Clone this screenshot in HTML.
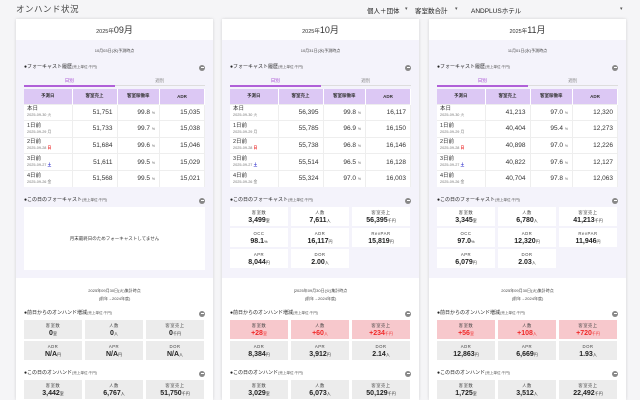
<!DOCTYPE html>
<html><head><meta charset="utf-8"><style>
*{margin:0;padding:0;box-sizing:border-box}
body{width:640px;height:400px;overflow:hidden;background:#f5f5f7;font-family:"Liberation Sans","Noto Sans CJK JP",sans-serif;color:#333;position:relative}
.ttl{position:absolute;left:16px;top:3px;font-size:8.5px;color:#444;letter-spacing:.5px}
.top{position:absolute;top:5px;font-size:6.5px;color:#222}
.car{position:absolute;top:6px;font-size:5px;color:#555}
.card{position:absolute;top:19px;width:197px;height:381px;background:#fff;box-shadow:0 0 3px rgba(0,0,0,.15);overflow:hidden}
.hd{position:absolute;left:0;top:0;width:100%;height:21px;line-height:22px;text-align:center;font-size:9px;color:#333}
.hd small{font-size:5.5px}
.lav{position:absolute;left:0;top:21px;width:100%;height:238px;background:#f4f3fb}
.ab{position:absolute}
.dt{left:0;width:100%;text-align:center;font-size:4px;color:#444;line-height:6px}
.sec{left:8px;right:8px;font-size:5px;line-height:7px;color:#222}
.sec small{font-size:3.6px;color:#555}
.mi{position:absolute;right:0;top:0.5px;width:6px;height:6px;border-radius:50%;background:#888}
.mi:after{content:"";position:absolute;left:1.5px;top:2.5px;width:3px;height:1px;background:#fff}
.tabs{left:8px;right:8px;height:11px;font-size:4.5px}
.tabs div{position:absolute;top:0;width:50%;text-align:center;line-height:9px}
.tabs .a{left:0;color:#a040d0;border-bottom:2px solid #b060d8}
.tabs .b{right:0;color:#888;border-bottom:1px solid #ddd;height:10px}
table{position:absolute;left:8px;top:70px;width:181px;border-collapse:collapse;background:#fff}
th{background:#dcc8f4;height:15px;font-size:4.5px;font-weight:bold;color:#333;border-right:1px solid #fff}
td{height:16.6px;border-top:1px solid #eee;border-right:1px solid #eee;font-size:6.5px;text-align:right;padding-right:4px;color:#333}
td.d{text-align:left;padding-left:3px;font-size:5.5px;line-height:6px;width:48px}
td.d span{display:block;font-size:3.8px;color:#777}
.r{color:#e33}.bl{color:#33c}
td small{font-size:3.5px;color:#666}
.bx{position:absolute;width:58px;height:19px;text-align:center;background:#fff}
.bx .l{font-size:4.3px;color:#444;margin-top:3px;line-height:6px;letter-spacing:.5px}
.bx .v{font-size:7px;line-height:9px;color:#222;font-weight:bold}
.bx .v small{font-size:4px;font-weight:normal}
.g{background:#ececec}
.p{background:#f7c8cc}
.p .v{color:#f02a2a}
.msg{left:8px;right:8px;top:188px;height:63px;background:#fff;font-size:4.5px;text-align:center;line-height:63px;color:#333}
</style></head><body>
<div class="ttl">オンハンド状況</div>
<div class="top" style="left:367px">個人＋団体</div><div class="car" style="left:405px">▾</div>
<div class="top" style="left:415px">客室数合計</div><div class="car" style="left:455px">▾</div>
<div class="top" style="left:471px">ANDPLUSホテル</div><div class="car" style="left:620px">▾</div>

<!-- card 1 -->
<div class="card" style="left:16px">
<div class="hd"><small>2025年</small>09月</div>
<div class="lav"></div>
<div class="ab dt" style="top:29px">10月03日(水)予測時点</div>
<div class="ab sec" style="top:45px">●フォーキャスト履歴<small>(売上単位:千円)</small><div class="mi"></div></div>
<div class="ab tabs" style="top:57px"><div class="a">日別</div><div class="b">週別</div></div>
<table><tr><th>予測日</th><th>客室売上</th><th>客室稼働率</th><th>ADR</th></tr>
<tr><td class="d">本日<span>2025-09-30 火</span></td><td>51,751</td><td>99.8 <small>%</small></td><td>15,035</td></tr>
<tr><td class="d">1日前<span>2025-09-29 月</span></td><td>51,733</td><td>99.7 <small>%</small></td><td>15,038</td></tr>
<tr><td class="d">2日前<span>2025-09-28 <b class="r">日</b></span></td><td>51,684</td><td>99.6 <small>%</small></td><td>15,046</td></tr>
<tr><td class="d">3日前<span>2025-09-27 <b class="bl">土</b></span></td><td>51,611</td><td>99.5 <small>%</small></td><td>15,029</td></tr>
<tr><td class="d">4日前<span>2025-09-26 金</span></td><td>51,568</td><td>99.5 <small>%</small></td><td>15,021</td></tr></table>
<div class="ab sec" style="top:178px">●この日のフォーキャスト<small>(売上単位:千円)</small><div class="mi"></div></div>
<div class="ab msg">月末最終日のためフォーキャストしてません</div>
<div class="ab dt" style="top:269px">2025年09月30日(火)集計時点</div>
<div class="ab dt" style="top:277px">(前年→2024年度)</div>
<div class="ab sec" style="top:291px">●前日からのオンハンド増減<small>(売上単位:千円)</small><div class="mi"></div></div>
<div class="bx g" style="left:8px;top:301px"><div class="l">客室数</div><div class="v">0<small>室</small></div></div>
<div class="bx g" style="left:69px;top:301px"><div class="l">人数</div><div class="v">0<small>人</small></div></div>
<div class="bx g" style="left:130px;top:301px"><div class="l">客室売上</div><div class="v">0<small>千円</small></div></div>
<div class="bx g" style="left:8px;top:322px"><div class="l">ADR</div><div class="v">N/A<small>円</small></div></div>
<div class="bx g" style="left:69px;top:322px"><div class="l">APR</div><div class="v">N/A<small>円</small></div></div>
<div class="bx g" style="left:130px;top:322px"><div class="l">DOR</div><div class="v">N/A<small>人</small></div></div>
<div class="ab sec" style="top:351px">●この日のオンハンド<small>(売上単位:千円)</small><div class="mi"></div></div>
<div class="bx g" style="left:8px;top:361px"><div class="l">客室数</div><div class="v">3,442<small>室</small></div></div>
<div class="bx g" style="left:69px;top:361px"><div class="l">人数</div><div class="v">6,767<small>人</small></div></div>
<div class="bx g" style="left:130px;top:361px"><div class="l">客室売上</div><div class="v">51,750<small>千円</small></div></div>
</div>

<!-- card 2 -->
<div class="card" style="left:222px">
<div class="hd"><small>2025年</small>10月</div>
<div class="lav"></div>
<div class="ab dt" style="top:29px">10月31日(水)予測時点</div>
<div class="ab sec" style="top:45px">●フォーキャスト履歴<small>(売上単位:千円)</small><div class="mi"></div></div>
<div class="ab tabs" style="top:57px"><div class="a">日別</div><div class="b">週別</div></div>
<table><tr><th>予測日</th><th>客室売上</th><th>客室稼働率</th><th>ADR</th></tr>
<tr><td class="d">本日<span>2025-09-30 火</span></td><td>56,395</td><td>99.8 <small>%</small></td><td>16,117</td></tr>
<tr><td class="d">1日前<span>2025-09-29 月</span></td><td>55,785</td><td>96.9 <small>%</small></td><td>16,150</td></tr>
<tr><td class="d">2日前<span>2025-09-28 <b class="r">日</b></span></td><td>55,738</td><td>96.8 <small>%</small></td><td>16,146</td></tr>
<tr><td class="d">3日前<span>2025-09-27 <b class="bl">土</b></span></td><td>55,514</td><td>96.5 <small>%</small></td><td>16,128</td></tr>
<tr><td class="d">4日前<span>2025-09-26 金</span></td><td>55,324</td><td>97.0 <small>%</small></td><td>16,003</td></tr></table>
<div class="ab sec" style="top:178px">●この日のフォーキャスト<small>(売上単位:千円)</small><div class="mi"></div></div>
<div class="bx" style="left:8px;top:188px"><div class="l">客室数</div><div class="v">3,499<small>室</small></div></div>
<div class="bx" style="left:69px;top:188px"><div class="l">人数</div><div class="v">7,611<small>人</small></div></div>
<div class="bx" style="left:130px;top:188px"><div class="l">客室売上</div><div class="v">56,395<small>千円</small></div></div>
<div class="bx" style="left:8px;top:209px"><div class="l">OCC</div><div class="v">98.1<small>%</small></div></div>
<div class="bx" style="left:69px;top:209px"><div class="l">ADR</div><div class="v">16,117<small>円</small></div></div>
<div class="bx" style="left:130px;top:209px"><div class="l">RevPAR</div><div class="v">15,819<small>円</small></div></div>
<div class="bx" style="left:8px;top:230px"><div class="l">APR</div><div class="v">8,044<small>円</small></div></div>
<div class="bx" style="left:69px;top:230px"><div class="l">DOR</div><div class="v">2.00<small>人</small></div></div>
<div class="ab dt" style="top:269px">[2025年09月30日(火)集計時点</div>
<div class="ab dt" style="top:277px">(前年→2024年度)</div>
<div class="ab sec" style="top:291px">●前日からのオンハンド増減<small>(売上単位:千円)</small><div class="mi"></div></div>
<div class="bx p" style="left:8px;top:301px"><div class="l">客室数</div><div class="v">+28<small>室</small></div></div>
<div class="bx p" style="left:69px;top:301px"><div class="l">人数</div><div class="v">+60<small>人</small></div></div>
<div class="bx p" style="left:130px;top:301px"><div class="l">客室売上</div><div class="v">+234<small>千円</small></div></div>
<div class="bx g" style="left:8px;top:322px"><div class="l">ADR</div><div class="v">8,384<small>円</small></div></div>
<div class="bx g" style="left:69px;top:322px"><div class="l">APR</div><div class="v">3,912<small>円</small></div></div>
<div class="bx g" style="left:130px;top:322px"><div class="l">DOR</div><div class="v">2.14<small>人</small></div></div>
<div class="ab sec" style="top:351px">●この日のオンハンド<small>(売上単位:千円)</small><div class="mi"></div></div>
<div class="bx g" style="left:8px;top:361px"><div class="l">客室数</div><div class="v">3,029<small>室</small></div></div>
<div class="bx g" style="left:69px;top:361px"><div class="l">人数</div><div class="v">6,073<small>人</small></div></div>
<div class="bx g" style="left:130px;top:361px"><div class="l">客室売上</div><div class="v">50,129<small>千円</small></div></div>
</div>

<!-- card 3 -->
<div class="card" style="left:429px">
<div class="hd"><small>2025年</small>11月</div>
<div class="lav"></div>
<div class="ab dt" style="top:29px">11月01日(水)予測時点</div>
<div class="ab sec" style="top:45px">●フォーキャスト履歴<small>(売上単位:千円)</small><div class="mi"></div></div>
<div class="ab tabs" style="top:57px"><div class="a">日別</div><div class="b">週別</div></div>
<table><tr><th>予測日</th><th>客室売上</th><th>客室稼働率</th><th>ADR</th></tr>
<tr><td class="d">本日<span>2025-09-30 火</span></td><td>41,213</td><td>97.0 <small>%</small></td><td>12,320</td></tr>
<tr><td class="d">1日前<span>2025-09-29 月</span></td><td>40,404</td><td>95.4 <small>%</small></td><td>12,273</td></tr>
<tr><td class="d">2日前<span>2025-09-28 <b class="r">日</b></span></td><td>40,898</td><td>97.0 <small>%</small></td><td>12,226</td></tr>
<tr><td class="d">3日前<span>2025-09-27 <b class="bl">土</b></span></td><td>40,822</td><td>97.6 <small>%</small></td><td>12,127</td></tr>
<tr><td class="d">4日前<span>2025-09-26 金</span></td><td>40,704</td><td>97.8 <small>%</small></td><td>12,063</td></tr></table>
<div class="ab sec" style="top:178px">●この日のフォーキャスト<small>(売上単位:千円)</small><div class="mi"></div></div>
<div class="bx" style="left:8px;top:188px"><div class="l">客室数</div><div class="v">3,345<small>室</small></div></div>
<div class="bx" style="left:69px;top:188px"><div class="l">人数</div><div class="v">6,780<small>人</small></div></div>
<div class="bx" style="left:130px;top:188px"><div class="l">客室売上</div><div class="v">41,213<small>千円</small></div></div>
<div class="bx" style="left:8px;top:209px"><div class="l">OCC</div><div class="v">97.0<small>%</small></div></div>
<div class="bx" style="left:69px;top:209px"><div class="l">ADR</div><div class="v">12,320<small>円</small></div></div>
<div class="bx" style="left:130px;top:209px"><div class="l">RevPAR</div><div class="v">11,946<small>円</small></div></div>
<div class="bx" style="left:8px;top:230px"><div class="l">APR</div><div class="v">6,079<small>円</small></div></div>
<div class="bx" style="left:69px;top:230px"><div class="l">DOR</div><div class="v">2.03<small>人</small></div></div>
<div class="ab dt" style="top:269px">2025年09月30日(火)集計時点</div>
<div class="ab dt" style="top:277px">(前年→2024年度)</div>
<div class="ab sec" style="top:291px">●前日からのオンハンド増減<small>(売上単位:千円)</small><div class="mi"></div></div>
<div class="bx p" style="left:8px;top:301px"><div class="l">客室数</div><div class="v">+56<small>室</small></div></div>
<div class="bx p" style="left:69px;top:301px"><div class="l">人数</div><div class="v">+108<small>人</small></div></div>
<div class="bx p" style="left:130px;top:301px"><div class="l">客室売上</div><div class="v">+720<small>千円</small></div></div>
<div class="bx g" style="left:8px;top:322px"><div class="l">ADR</div><div class="v">12,863<small>円</small></div></div>
<div class="bx g" style="left:69px;top:322px"><div class="l">APR</div><div class="v">6,669<small>円</small></div></div>
<div class="bx g" style="left:130px;top:322px"><div class="l">DOR</div><div class="v">1.93<small>人</small></div></div>
<div class="ab sec" style="top:351px">●この日のオンハンド<small>(売上単位:千円)</small><div class="mi"></div></div>
<div class="bx g" style="left:8px;top:361px"><div class="l">客室数</div><div class="v">1,725<small>室</small></div></div>
<div class="bx g" style="left:69px;top:361px"><div class="l">人数</div><div class="v">3,512<small>人</small></div></div>
<div class="bx g" style="left:130px;top:361px"><div class="l">客室売上</div><div class="v">22,492<small>千円</small></div></div>
</div>
</body></html>
